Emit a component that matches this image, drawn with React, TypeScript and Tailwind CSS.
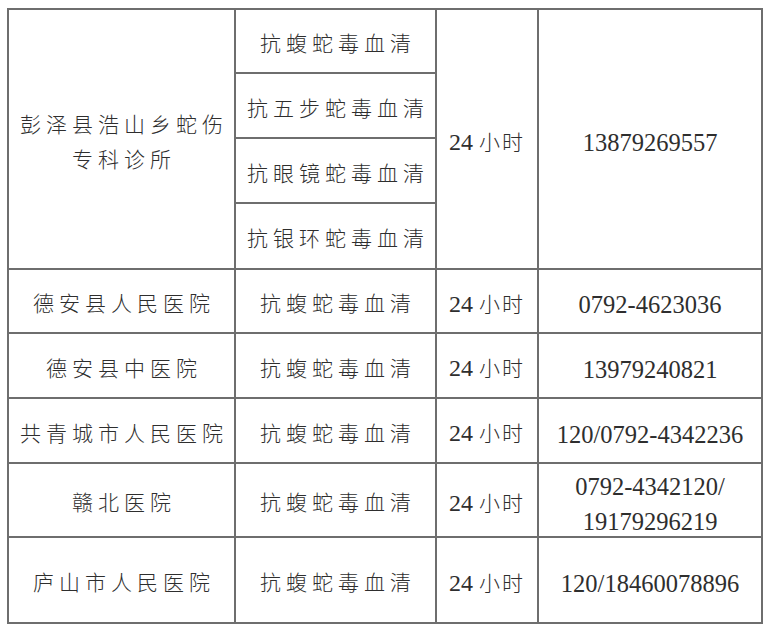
const cn = "text-[21px] tracking-[5px] pl-[5px] font-light";
const num = "text-[24.5px] tracking-[0px]";

const Cell = ({ children, className = "" }: { children: React.ReactNode; className?: string }) => (
  <div className={`bg-white flex items-center justify-center text-center leading-[35px] pt-[7px] ${className}`}>
    {children}
  </div>
);

const rows = [
  { name: "德安县人民医院", phone: ["0792-4623036"] },
  { name: "德安县中医院", phone: ["13979240821"] },
  { name: "共青城市人民医院", phone: ["120/0792-4342236"] },
  { name: "赣北医院", phone: ["0792-4342120/", "19179296219"] },
  { name: "庐山市人民医院", phone: ["120/18460078896"] },
];

const Hours = () => (
  <Cell className="text-[24px]">
    <span>
      24 <span className="text-[21px] tracking-[2px] font-light">小时</span>
    </span>
  </Cell>
);

export default function App() {
  return (
    <div
      className="w-[768px] h-[630px] bg-white pl-[7px] pt-[8px] text-[#2e2e2e]"
      style={{ fontFamily: '"Liberation Serif", "Noto Sans CJK SC", serif' }}
    >
      <div className="inline-grid grid-cols-[225px_199px_100px_222px] grid-rows-[62px_63px_63px_64px_62px_63px_63px_72px_84px] gap-[2px] p-[2px] bg-[#6e6e6e]">
        <Cell className={`row-span-4 ${cn} tracking-[4.5px]`}>
          <div>
            彭泽县浩山乡蛇伤
            <br />
            专科诊所
          </div>
        </Cell>
        <Cell className={cn}>抗蝮蛇毒血清</Cell>
        <div className="row-span-4 grid">
          <Hours />
        </div>
        <Cell className={`row-span-4 ${num}`}>13879269557</Cell>
        <Cell className={cn}>抗五步蛇毒血清</Cell>
        <Cell className={cn}>抗眼镜蛇毒血清</Cell>
        <Cell className={cn}>抗银环蛇毒血清</Cell>

        {rows.map((r) => (
          <div key={r.name} className="contents">
            <Cell className={cn}>{r.name}</Cell>
            <Cell className={cn}>抗蝮蛇毒血清</Cell>
            <Hours />
            <Cell className={num}>
              <div>
                {r.phone.map((p) => (
                  <div key={p}>{p}</div>
                ))}
              </div>
            </Cell>
          </div>
        ))}
      </div>
    </div>
  );
}
